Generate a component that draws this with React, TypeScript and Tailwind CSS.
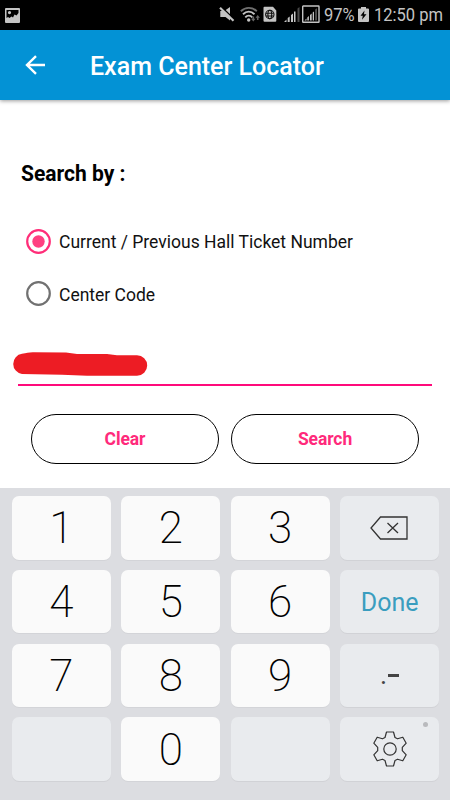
import { useState } from 'react';
import type { ReactNode } from 'react';

type KeyProps = {
  label?: string;
  children?: ReactNode;
};

type SearchMode = 'ticket' | 'center';

function StatusBar() {
  return (
    <div className="flex h-[30px] items-center bg-black text-[#c4c4c4]">
      <svg width="15" height="15" viewBox="0 0 15 15" className="ml-[5px]">
        <path
          fill="currentColor"
          fillRule="evenodd"
          d="M1 0h13a1 1 0 0 1 1 1v13a1 1 0 0 1-1 1H1a1 1 0 0 1-1-1V1a1 1 0 0 1 1-1ZM1.500 2v8l1.500-1 1.500 1 2-1.500 1.500 1 1.500-3 2 1L13.500 5V2ZM4.500 3a1.600 1.600 0 1 1 0 3.200a1.600 1.600 0 0 1 0-3.200Z"
        />
      </svg>
      <svg width="103" height="18" viewBox="0 0 103 18" className="ml-[198px] overflow-visible">
        {/* muted speaker */}
        <path fill="currentColor" d="M2.300 5h4l5.700-4v13.500L7.500 11H2.300Z" />
        <path d="M3 .5 16.500 13.500" stroke="#000" strokeWidth="1.600" />
        <path d="M2 1.800 15.500 14.800" stroke="currentColor" strokeWidth="2.200" />
        {/* wifi */}
        <g fill="none" stroke="currentColor" strokeWidth="1.900">
          <path stroke="#707070" d="M22.800 5.200c4.800-4.500 11.200-4.500 16 0" />
          <path d="M25 8.200c3.500-3.300 8-3.300 11.500 0" />
          <path d="M27.300 11.300c2-2 5-2 7 0" />
        </g>
        <circle cx="30.700" cy="14" r="1.700" fill="currentColor" />
        <path
          fill="#666"
          d="m35.300 15.500-2.200-2.700h1.400v-2.300h1.600v2.300h1.400ZM39.700 9l2.200 2.700h-1.400V14h-1.600v-2.300h-1.400Z"
        />
        {/* sim card with globe */}
        <path fill="currentColor" d="M46.500.8H55L58.300 4.500v10.300a1 1 0 0 1-1 1H46.500a1 1 0 0 1-1-1V1.800a1 1 0 0 1 1-1Z" />
        <g fill="none" stroke="#111" strokeWidth="1.100">
          <circle cx="51.800" cy="8.500" r="4.200" />
          <ellipse cx="51.800" cy="8.500" rx="1.900" ry="4.200" />
          <path d="M48 7.200h7.600M48 10h7.600" />
        </g>
        {/* signal strength, both sims */}
        <path fill="currentColor" d="M66 16l2.500-2.500V16ZM69.700 16v-4l2-1.500V16ZM73 16V9l2-1.500V16ZM76 16V5.500h1.500V16Z" />
        <path fill="#4a4a4a" d="M79.500 16V2.500l2-1.500v15Z" />
        <rect x="84.700" y="0" width="16.300" height="16.300" rx="0.500" fill="none" stroke="currentColor" strokeWidth="1.400" />
        <path
          fill="currentColor"
          d="M86.500 14.500l2-2v2ZM89.300 14.500V11.500l1.600-1.500v4.500ZM92 14.500V9l1.700-1.500v7ZM94.700 14.500V6.500l1.300-1v9Z"
        />
        <path fill="#666" d="M97.300 14.500V3.500l1.500-1.300v12.300Z" />
      </svg>
      <span className="ml-[3px] w-[32px] origin-left scale-x-[0.87] text-[19px] leading-[30px] whitespace-nowrap">
        97%
      </span>
      <svg width="11" height="15" viewBox="0 0 11 15" className="mb-px ml-[2px]">
        <path fill="currentColor" d="M3 0h5v1.500h2a1 1 0 0 1 1 1V14a1 1 0 0 1-1 1H1a1 1 0 0 1-1-1V2.500a1 1 0 0 1 1-1h2Z" />
        <path fill="#000" d="m6.500 3.500-4 5.200h2.300L4 12.800l4.500-5.500H6Z" />
      </svg>
      <span className="ml-[5px] w-[68px] origin-left scale-x-[0.87] text-[19px] leading-[30px] whitespace-nowrap">
        12:50 pm
      </span>
    </div>
  );
}

function AppBar() {
  return (
    <header className="flex h-[70px] items-center bg-[#0392d5] text-white shadow-[0_1px_4px_rgba(0,0,0,0.4)]">
      <button type="button" aria-label="Back" className="ml-[25px]">
        <svg width="21" height="20" viewBox="0 0 21 20" fill="none" stroke="currentColor" strokeWidth="2.400">
          <path d="M20 10H2M11 1.200 2 10l9 8.800" />
        </svg>
      </button>
      <h1 className="ml-[44px] pt-[3px] text-[25px] leading-[30px] font-medium whitespace-nowrap">
        Exam Center Locator
      </h1>
    </header>
  );
}

type RadioRowProps = {
  label: string;
  checked: boolean;
  onSelect: () => void;
};

function RadioRow({ label, checked, onSelect }: RadioRowProps) {
  return (
    <button
      type="button"
      role="radio"
      aria-checked={checked}
      onClick={onSelect}
      className="flex h-[26px] items-center gap-[8px]"
    >
      <svg width="25" height="25" viewBox="0 0 25 25">
        <circle cx="12.500" cy="12.500" r="11.300" fill="none" stroke={checked ? '#ff2d78' : '#717171'} strokeWidth="2.200" />
        {checked && <circle cx="12.500" cy="12.500" r="6.200" fill="#ff4081" />}
      </svg>
      <span className="pt-[2px] text-[17.500px] leading-[24px] whitespace-nowrap text-[#111]">{label}</span>
    </button>
  );
}

function PillButton({ label }: { label: string }) {
  return (
    <button
      type="button"
      className="h-[50px] w-[188px] rounded-full border border-black bg-white pt-[2px] text-[17.500px] font-bold tracking-[-0.1px] text-[#ff2a7b]"
    >
      {label}
    </button>
  );
}

function DigitKey({ label }: KeyProps) {
  return (
    <button
      type="button"
      className="flex items-center justify-center rounded-[7px] bg-[#fafafa] pt-px text-[44px] leading-none font-extralight text-black shadow-[0_1px_0_#d3d4d8]"
    >
      {label}
    </button>
  );
}

function ActionKey({ label, children }: KeyProps) {
  return (
    <button
      type="button"
      aria-label={label}
      className="relative flex items-center justify-center rounded-[7px] bg-[#e9ebee] shadow-[0_1px_0_#d1d2d6]"
    >
      {children}
    </button>
  );
}

function Keypad() {
  return (
    <div className="h-[312px] bg-[#dcdde1] pt-[8px] pr-[11px] pl-[12px]">
      <div className="grid h-[285px] grid-cols-4 grid-rows-4 gap-x-[10.700px] gap-y-[10.300px]">
        <DigitKey label="1" />
        <DigitKey label="2" />
        <DigitKey label="3" />
        <ActionKey label="Backspace">
          <svg width="38" height="24" viewBox="0 0 38 24" fill="none" stroke="#333" strokeWidth="1.300" className="mr-px">
            <path d="M10.500 1H37v22H10.500L1 12Z" />
            <path d="m17.500 7 10.500 10M28 7 17.500 17" />
          </svg>
        </ActionKey>
        <DigitKey label="4" />
        <DigitKey label="5" />
        <DigitKey label="6" />
        <ActionKey>
          <span className="pt-px text-[25px] leading-none text-[#3a9dbf]">Done</span>
        </ActionKey>
        <DigitKey label="7" />
        <DigitKey label="8" />
        <DigitKey label="9" />
        <ActionKey>
          <span className="text-[27px] leading-none text-[#444]">.</span>
          <span className="ml-[1px] h-[2.500px] w-[11px] bg-[#444]" />
        </ActionKey>
        <ActionKey />
        <DigitKey label="0" />
        <ActionKey />
        <ActionKey label="Keyboard settings">
          <svg width="36" height="36" viewBox="0 0 36 36" fill="none" stroke="#333" strokeWidth="1.200" strokeLinejoin="round">
            <path d="M14.500 1h7l1.500 5.500 2.500 1.300 5.300-1.600 3.400 6-3.900 4.100v3.400l3.900 4.100-3.400 6-5.300-1.600-2.500 1.300L21.500 35h-7L13 29.500l-2.500-1.300-5.300 1.600-3.400-6 3.900-4.100v-3.400l-3.900-4.100 3.400-6 5.300 1.600L13 6.500Z" />
            <circle cx="18" cy="18" r="6.200" />
          </svg>
          <span className="absolute top-[5px] right-[11px] size-[5px] rounded-full bg-[#b9babd]" />
        </ActionKey>
      </div>
    </div>
  );
}

export default function App() {
  const [mode, setMode] = useState<SearchMode>('ticket');

  return (
    <div className="flex h-[800px] w-[450px] flex-col overflow-hidden bg-white font-[Roboto,sans-serif]">
      <StatusBar />
      <AppBar />

      <main className="h-[388px]">
        <h2 className="ml-[21px] origin-left scale-x-[0.955] pt-[60px] text-[22px] leading-[28px] font-bold text-black">
          Search by :
        </h2>

        <div role="radiogroup" className="mt-[40px] ml-[26px] flex flex-col gap-[26.500px]">
          <RadioRow
            label="Current / Previous Hall Ticket Number"
            checked={mode === 'ticket'}
            onSelect={() => setMode('ticket')}
          />
          <RadioRow label="Center Code" checked={mode === 'center'} onSelect={() => setMode('center')} />
        </div>

        <div className="mt-[45px] ml-[12px]">
          <svg width="136" height="24" viewBox="0 0 136 24">
            <path
              fill="#ed1c24"
              d="M10 1.800C15 1 17 0 22 .2l32 .2 11 1.500 30 .2 10 1.200h20a10.200 10.200 0 0 1 0 20.400H75l-25-1L10 22A10.200 10.200 0 0 1 10 1.800Z"
            />
          </svg>
        </div>
        <div className="mt-[8px] ml-[18px] h-[2px] w-[414px] bg-[#ff0a7b]" />

        <div className="mt-[28px] ml-[31px] flex gap-[12px]">
          <PillButton label="Clear" />
          <PillButton label="Search" />
        </div>
      </main>

      <Keypad />
    </div>
  );
}
